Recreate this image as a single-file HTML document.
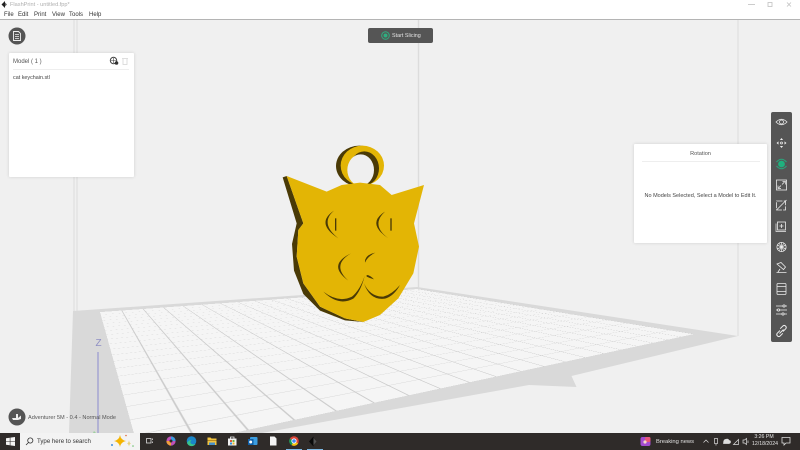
<!DOCTYPE html>
<html>
<head>
<meta charset="utf-8">
<title>FlashPrint</title>
<style>
html,body{margin:0;padding:0;width:800px;height:450px;overflow:hidden;background:#f0f0f0;font-family:"Liberation Sans",sans-serif;color:#444}
.a{position:absolute;white-space:nowrap}
#scene{position:absolute;left:0;top:0;width:800px;height:433px;overflow:hidden}
#grid{position:absolute;left:0;top:0;width:1000px;height:1000px;transform-origin:0 0;
transform:matrix3d(-0.347126,-0.07099,0,-0.00030126,-0.03515,-0.1052,0,-0.00044978,0,0,1,0,417,289,0,1);
background-color:#f5f5f5;
background-image:linear-gradient(to right,#cccccc 2px,transparent 2px),linear-gradient(to bottom,#dcdcdc 1.6px,transparent 1.6px);
background-size:50px 50px}
.panel{position:absolute;background:#fff;box-shadow:0 0 3px rgba(0,0,0,.14);border-radius:1px}
</style>
</head>
<body>
<div id="scene">
<svg class="a" style="left:0;top:0" width="800" height="433" viewBox="0 0 800 433">
<g stroke="#dcdcdc" fill="none">
<path d="M74 20V311M77 20V311" stroke-width="1"/>
<path d="M418.500 20V288" stroke-width="1.400"/>
<path d="M738 20V336" stroke-width="1"/>
</g>
<polygon fill="#d9d9d9" points="73,311 417,287 738,336 571.500,376 576.500,387 529,385 262,433 69,433"/>
</svg>
<div id="grid"></div>
<svg class="a" style="left:0;top:0" width="800" height="433" viewBox="0 0 800 433">
<path d="M98 352V433" stroke="#8c8cd0" stroke-width="1"/>
<path d="M94 431l2 2h-3z" fill="#9ed09e"/>
<text x="95.500" y="346" font-family="Liberation Sans" font-size="10" fill="#8f8fc4">Z</text>
</svg>
</div>

<!-- cat -->
<svg class="a" style="left:270px;top:140px" width="170" height="190" viewBox="0 0 510 570">
<ellipse cx="268" cy="78" rx="70" ry="61" fill="#4a3a06"/>
<ellipse cx="277" cy="77" rx="65" ry="60" fill="#e3b505"/>
<ellipse cx="283" cy="85" rx="44" ry="51" fill="#4a3a06"/>
<ellipse cx="272" cy="90" rx="40" ry="47" fill="#efefef"/>
<path d="M38 112L50 108L100 250L85 270L80 350L100 430L150 500L225 535L280 546L225 541L150 512L100 462L72 392L66 312L80 250Z" fill="#4a3a06"/>
<path d="M50 108L170 155L215 135L270 128L330 135L365 165L462 135L432 250L447 320L430 400L385 475L330 525L280 546L225 535L150 500L100 430L80 350L85 270L100 250Z" fill="#e3b505"/>
<g fill="#4a3a06">
<path d="M192 212Q135 250 205 295Q148 250 192 212Z"/>
<path d="M195 235h4v37h-4z"/>
<path d="M345 215Q288 250 355 295Q301 255 345 215Z"/>
<path d="M361 235h4v37h-4z"/>
<path d="M243 340Q170 375 235 422Q183 375 243 340Z"/>
<path d="M316 338Q283 345 285 368Q292 350 316 338Z"/>
<path d="M290 405Q300 405 312 418Q298 414 290 410Z"/>
<path d="M160 455Q205 500 250 476Q272 455 284 408Q270 450 246 470Q205 490 160 455Z"/>
<path d="M282 430Q300 482 345 476Q372 468 390 435Q365 464 340 470Q300 470 282 430Z"/>
</g>
</svg>

<!-- title bar -->
<div class="a" style="left:0;top:0;width:800px;height:19px;background:#fff;border-bottom:1px solid #b4b4b4"></div>
<svg class="a" style="left:1px;top:1px" width="8" height="7" viewBox="0 0 8 7"><path d="M4 0L0.500 3.500L4 7Z" fill="#222"/><path d="M4 1.500L6 3.500L4 5.500Z" fill="#666"/></svg>
<div class="a" style="left:10px;top:2px;font-size:5.600px;line-height:7px;color:#b0b0b0">FlashPrint - untitled.fpp*</div>
<div class="a" style="left:4px;top:12px;font-size:6px;line-height:7px;color:#333">File</div>
<div class="a" style="left:18px;top:12px;font-size:6px;line-height:7px;color:#333">Edit</div>
<div class="a" style="left:34px;top:12px;font-size:6px;line-height:7px;color:#333">Print</div>
<div class="a" style="left:52px;top:12px;font-size:6px;line-height:7px;color:#333">View</div>
<div class="a" style="left:69px;top:12px;font-size:6px;line-height:7px;color:#333">Tools</div>
<div class="a" style="left:89px;top:12px;font-size:6px;line-height:7px;color:#333">Help</div>
<svg class="a" style="left:745px;top:0" width="55" height="9" viewBox="0 0 55 9" fill="none" stroke="#c0c0c0" stroke-width=".8">
<path d="M3 4.500H10"/><rect x="23" y="2.500" width="4" height="4"/><path d="M42 2.500l4 4M46 2.500l-4 4"/>
</svg>

<!-- doc button -->
<svg class="a" style="left:8px;top:27px" width="18" height="18" viewBox="0 0 18 18">
<circle cx="9" cy="9" r="8.500" fill="#555"/>
<path d="M5.500 4.500H10.500L12.500 6.500V13.500H5.500Z" fill="none" stroke="#f0f0f0" stroke-width=".9"/>
<path d="M7 7.500H11M7 9.500H11M7 11.500H11" stroke="#f0f0f0" stroke-width=".8"/>
</svg>

<!-- model panel -->
<div class="panel" style="left:9px;top:53px;width:125px;height:124px"></div>
<div class="a" style="left:13px;top:58px;font-size:6px;line-height:8px;color:#555">Model ( 1 )</div>
<svg class="a" style="left:109px;top:56px" width="22" height="10" viewBox="0 0 22 10">
<circle cx="4.500" cy="4.500" r="3.200" fill="none" stroke="#444" stroke-width="1"/><path d="M2 4.500H7M4.500 2V7" stroke="#444" stroke-width=".6"/><circle cx="7.500" cy="7" r="1.800" fill="#333"/>
<path d="M13 2.500H19M14 3V8.500H18V3" fill="none" stroke="#d4d4d4" stroke-width=".8"/>
</svg>
<div class="a" style="left:13px;top:69px;width:116px;height:1px;background:#eee"></div>
<div class="a" style="left:13px;top:74px;font-size:5.400px;line-height:8px;color:#444">cat keychain.stl</div>

<!-- start slicing -->
<div class="a" style="left:368px;top:28px;width:65px;height:15px;background:#555;border-radius:2px"></div>
<svg class="a" style="left:381px;top:31px" width="9" height="9" viewBox="0 0 9 9"><circle cx="4.500" cy="4.500" r="3.800" fill="none" stroke="#2fae7f" stroke-width="1"/><circle cx="4.500" cy="4.500" r="2" fill="#2fae7f"/></svg>
<div class="a" style="left:392px;top:31.500px;font-size:5.400px;line-height:8px;color:#e4e4e4">Start Slicing</div>

<!-- rotation panel -->
<div class="panel" style="left:634px;top:144px;width:133px;height:99px"></div>
<div class="a" style="left:634px;top:150px;width:133px;text-align:center;font-size:5.600px;line-height:8px;color:#555">Rotation</div>
<div class="a" style="left:642px;top:161px;width:118px;height:1px;background:#eee"></div>
<div class="a" style="left:634px;top:192px;width:133px;text-align:center;font-size:5.500px;line-height:8px;color:#444">No Models Selected, Select a Model to Edit It.</div>

<!-- toolbar -->
<div class="a" style="left:771px;top:112px;width:21px;height:230px;background:#555;border-radius:2px"></div>
<svg class="a" style="left:771px;top:112px" width="21" height="230" viewBox="771 112 21 230" fill="none" stroke="#ececec" stroke-width=".8">
<path d="M776 122Q781.500 116.500 787 122Q781.500 127.500 776 122Z"/><circle cx="781.500" cy="122" r="2"/>
<path d="M781.500 138l1.600 2h-3.200zM781.500 148l1.600-2h-3.200zM776.500 143l2-1.600v3.200zM786.500 143l-2-1.600v3.200z" fill="#ececec" stroke="none"/><circle cx="781.500" cy="143" r="1"/>
<circle cx="781.500" cy="164" r="3.400" fill="#1fb17e" stroke="none"/>
<path d="M776.500 162Q781.500 156.500 786.500 162M776.500 166Q781.500 171.500 786.500 166" stroke="#2aa67c" stroke-width="1"/>
<rect x="776.500" y="180" width="10" height="10"/><path d="M778.500 188l2.500-2.500M784.500 182l-2.500 2.500"/><path d="M782.500 181.500h3v3M778 185.500v3h3" stroke-width=".7"/>
<rect x="776.500" y="201" width="9" height="9" stroke-dasharray="6 1.200"/><path d="M776.500 210l10-10"/>
<rect x="777.500" y="222" width="8" height="8"/><path d="M776 223.500V231.500H786" stroke-width=".7"/><path d="M781.500 224v4M779.500 226h4"/>
<circle cx="781.500" cy="247" r="4.600"/><path d="M777 245l9 4M777 249l9-4M781.500 242.400v9.200M779 243l5 8M784 243l-5 8" stroke-width=".7"/>
<path d="M777 264l4-1.500 4.500 4.500-2 2.500zM776.500 272.500H786.500M778 272l2-3"/>
<rect x="777" y="283.500" width="9" height="11" rx="1"/><path d="M777 286.500H786M777 291.500H786"/>
<path d="M776 306H787M776 310H787M776 314H787"/><circle cx="784" cy="306" r="1.100" fill="#555"/><circle cx="778.500" cy="310" r="1.100" fill="#555"/><circle cx="783" cy="314" r="1.100" fill="#555"/>
<path d="M780 330.500l-2.800 2.800a2 2 0 0 0 2.800 2.800l2.800-2.800M783 331.500l2.800-2.800a2 2 0 0 0-2.800-2.800l-2.800 2.800M779.500 333.500l4-4" stroke-width="1"/>
</svg>

<!-- machine -->
<svg class="a" style="left:8px;top:408px" width="18" height="18" viewBox="0 0 18 18">
<circle cx="9" cy="9" r="8.500" fill="#555"/><path d="M4 10H10L13 7.500V11L10 12H5ZM8 6h2v4H8z" fill="#eee"/>
</svg>
<div class="a" style="left:28px;top:414px;font-size:5.600px;line-height:8px;color:#555">Adventurer 5M - 0.4 - Normal Mode</div>

<!-- taskbar -->
<div class="a" style="left:0;top:433px;width:800px;height:17px;background:#2f2b29"></div>
<div class="a" style="left:20px;top:433px;width:120px;height:17px;background:#f3f3f3"></div>
<svg class="a" style="left:6px;top:437px" width="9" height="9" viewBox="0 0 9 9" fill="#f4f4f4"><path d="M0 1.200L3.800.7V4.200H0ZM4.400.6L9 0V4.200H4.400ZM0 4.800H3.800V8.300L0 7.800ZM4.400 4.800H9V9L4.400 8.400Z"/></svg>
<svg class="a" style="left:25px;top:437px" width="9" height="9" viewBox="0 0 9 9" fill="none" stroke="#333" stroke-width=".8"><circle cx="5.300" cy="3.500" r="2.600"/><path d="M3.500 5.500L1 8"/></svg>
<div class="a" style="left:37px;top:437.500px;font-size:6.100px;line-height:8px;color:#333">Type here to search</div>
<svg class="a" style="left:110px;top:433px" width="26" height="17" viewBox="0 0 26 17">
<path d="M10 2Q10.800 7 16 8Q10.800 9 10 14Q9.200 9 4 8Q9.200 7 10 2Z" fill="#f4b400"/>
<path d="M19 7Q19.400 10 21 10.500Q19.400 11 19 13.500Q18.600 11 17 10.500Q18.600 10 19 7Z" fill="#e8d27c"/>
<circle cx="2" cy="12" r="1" fill="#3f8fe0"/><circle cx="16" cy="2.500" r=".8" fill="#e06a40"/><circle cx="23" cy="13" r=".8" fill="#6cc070"/>
</svg>
<svg class="a" style="left:146px;top:437px" width="8" height="8" viewBox="0 0 8 8" fill="none" stroke="#ddd" stroke-width=".8"><rect x=".5" y="1.500" width="4.500" height="4.500"/><path d="M6.500 1.500V3M6.500 4.500V6"/></svg>
<svg class="a" style="left:165px;top:435px" width="160" height="14" viewBox="165 435 160 14">
<circle cx="171" cy="441" r="4.600" fill="#c052b8"/><path d="M171 436.400a4.600 4.600 0 0 1 4.600 4.600h-4.600z" fill="#3c9ee0"/><path d="M166.400 441a4.600 4.600 0 0 0 4.600 4.600v-4.600z" fill="#f2a03c"/><circle cx="171" cy="441" r="1.500" fill="#2f2b29"/>
<circle cx="191.500" cy="441" r="4.800" fill="#1a86c8"/><path d="M187 443a4.800 4.800 0 0 0 8.500 1q-3 1-4.500-.5t.5-3.500q-3 0-4.500 3z" fill="#38c48c"/>
<path d="M207.500 437.500h3l1 1h5v6.500h-9z" fill="#f3c43f"/><path d="M207.500 440h9v1h-9z" fill="#b98a20"/><path d="M209 442.500h6v2.500h-6z" fill="#4a90c8"/>
<path d="M228 438.500h8.500v7h-8.500z" fill="#f2f2f2"/><path d="M230.500 438.500v-1.500h3.500v1.500" fill="none" stroke="#f2f2f2" stroke-width=".8"/><rect x="230" y="440" width="2" height="2" fill="#e0573c"/><rect x="232.500" y="440" width="2" height="2" fill="#6cb840"/><rect x="230" y="442.500" width="2" height="2" fill="#2f8fe0"/><rect x="232.500" y="442.500" width="2" height="2" fill="#f0b428"/>
<rect x="250" y="437" width="7.500" height="8" rx="1" fill="#3b9de0"/><rect x="248" y="439" width="5.500" height="6" fill="#0f5fa8"/><circle cx="250.700" cy="442" r="1.500" fill="#fff"/>
<path d="M270 436.500h4.500l2 2v7h-6.500z" fill="#f4f4f4"/>
<circle cx="294" cy="441" r="4.800" fill="#dc4437"/><path d="M294 441L298.200 443.400A4.800 4.800 0 0 1 291.500 445.100Z" fill="#f4c20d"/><path d="M294 441L291.500 445.100A4.800 4.800 0 0 1 289.800 438.600Z" fill="#0f9d58"/><circle cx="294" cy="441" r="2.200" fill="#4285f4" stroke="#fff" stroke-width=".8"/>
<path d="M313.500 436.500L309 441.500L313.500 446.500Z" fill="#0a0a0a"/><path d="M313.500 438L316.500 441.500L313.500 445Z" fill="#555"/>
</svg>
<div class="a" style="left:286px;top:449px;width:16px;height:1px;background:#7cb8e4"></div>
<div class="a" style="left:307px;top:449px;width:16px;height:1px;background:#7cb8e4"></div>
<svg class="a" style="left:640px;top:436px" width="11" height="11" viewBox="0 0 11 11"><rect x=".5" y="1" width="10" height="9" rx="2" fill="#a24bd0"/><rect x="5" y="1" width="5.500" height="5" rx="1.500" fill="#e8567c"/><circle cx="5" cy="6" r="1.600" fill="#f6d8c8"/></svg>
<div class="a" style="left:656px;top:437.500px;font-size:5.800px;line-height:8px;color:#e0e0e0">Breaking news</div>
<svg class="a" style="left:702px;top:436px" width="50" height="11" viewBox="702 436 50 11" fill="none" stroke="#ddd" stroke-width=".7">
<path d="M703.500 442.500L706 440L708.500 442.500"/>
<rect x="714.500" y="438.500" width="3" height="5"/><path d="M716 444v1.500"/>
<path d="M723.500 443.500h5.500a1.500 1.500 0 0 0 0-3q-1-2-3-1.200q-2.500 0-2.500 4.200z" fill="#ddd"/>
<path d="M733.500 444.500h5v-5z"/>
<path d="M743 440v3h1.500l2 1.500v-6l-2 1.500zM748 440.500v2.500"/>
</svg>
<div class="a" style="left:752px;top:433.500px;width:24px;text-align:center;font-size:5.200px;line-height:7.500px;color:#e4e4e4">3:26 PM<br>12/18/2024</div>
<svg class="a" style="left:781px;top:436px" width="10" height="10" viewBox="0 0 10 10" fill="none" stroke="#ddd" stroke-width=".8"><path d="M1 1.500H9V7H5L3 9V7H1Z"/></svg>
</body>
</html>
